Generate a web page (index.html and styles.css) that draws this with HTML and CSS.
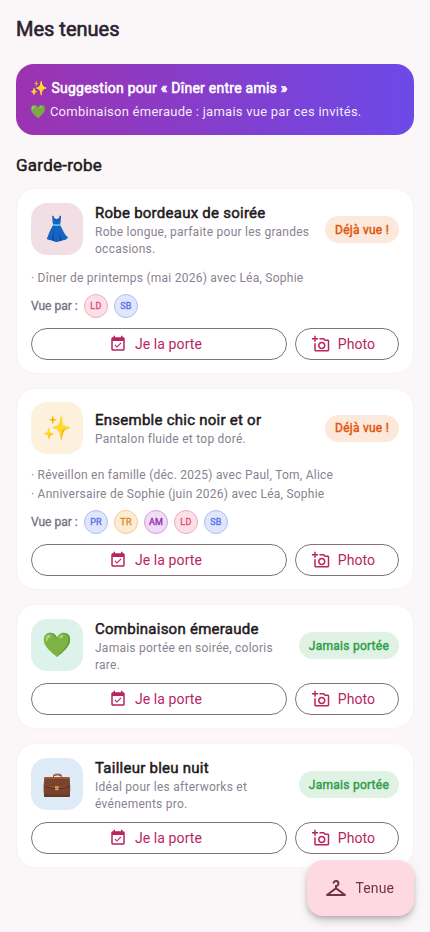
FILE: index.html
```html
<!DOCTYPE html>
<html lang="fr">
<head>
<meta charset="utf-8">
<meta name="viewport" content="width=device-width, initial-scale=1">
<title>Mes tenues</title>
<link rel="stylesheet" href="styles.css">
</head>
<body>
<svg class="sprite" aria-hidden="true">
  <symbol id="event" viewBox="0 0 24 24"><path d="M16.53 11.06L15.47 10l-4.88 4.88-2.12-2.12-1.06 1.06L10.59 17l5.94-5.94zM19 3h-1V1h-2v2H8V1H6v2H5c-1.11 0-1.99.9-1.99 2L3 19c0 1.1.89 2 2 2h14c1.1 0 2-.9 2-2V5c0-1.1-.9-2-2-2zm0 16H5V8h14v11z"/></symbol>
  <symbol id="camera" viewBox="0 0 24 24"><path d="M21 6h-3.17L16 4h-6v2h5.12l1.83 2H21v12H5v-9H3v9c0 1.1.9 2 2 2h16c1.1 0 2-.9 2-2V8c0-1.1-.9-2-2-2zM8 14c0 2.76 2.24 5 5 5s5-2.24 5-5-2.24-5-5-5-5 2.24-5 5zm5-3c1.65 0 3 1.35 3 3s-1.35 3-3 3-3-1.35-3-3 1.35-3 3-3zM5 6h3V4H5V1H3v3H0v2h3v3h2z"/></symbol>
  <symbol id="hanger" viewBox="0 0 24 24"><path d="M21.6 18.2L13 11.75v-.91c1.65-.49 2.8-2.17 2.43-4.05-.26-1.31-1.3-2.4-2.61-2.7C10.54 3.57 8.5 5.3 8.5 7.5h2c0-.83.67-1.5 1.5-1.5s1.5.67 1.5 1.5c0 .84-.69 1.52-1.53 1.5-.54-.01-.97.45-.97.99v1.76L2.4 18.2c-.77.58-.36 1.8.6 1.8h18c.96 0 1.37-1.22.6-1.8zM6 18l6-4.5 6 4.5H6z"/></symbol>
</svg>
<main class="page">
  <h1 class="title">Mes tenues</h1>
  <section class="suggestion">
    <p class="suggestion-title">✨ Suggestion pour « Dîner entre amis »</p>
    <p class="suggestion-text">💚 Combinaison émeraude : jamais vue par ces invités.</p>
  </section>
  <h2 class="section-title">Garde-robe</h2>

  <article class="card">
    <div class="head">
      <div class="thumb thumb-rose">👗</div>
      <div class="info"><h3 class="name">Robe bordeaux de soirée</h3><p class="desc">Robe longue, parfaite pour les grandes occasions.</p></div>
      <span class="chip chip-seen">Déjà vue !</span>
    </div>
    <ul class="wears"><li>· Dîner de printemps (mai 2026) avec Léa, Sophie</li></ul>
    <div class="seen"><span class="seen-label">Vue par :</span><span class="avatar pink">LD</span><span class="avatar blue">SB</span></div>
    <div class="actions">
      <button class="btn btn-wide"><svg class="icon"><use href="#event"/></svg>Je la porte</button>
      <button class="btn"><svg class="icon"><use href="#camera"/></svg>Photo</button>
    </div>
  </article>

  <article class="card">
    <div class="head">
      <div class="thumb thumb-gold">✨</div>
      <div class="info"><h3 class="name">Ensemble chic noir et or</h3><p class="desc">Pantalon fluide et top doré.</p></div>
      <span class="chip chip-seen">Déjà vue !</span>
    </div>
    <ul class="wears"><li>· Réveillon en famille (déc. 2025) avec Paul, Tom, Alice</li><li>· Anniversaire de Sophie (juin 2026) avec Léa, Sophie</li></ul>
    <div class="seen"><span class="seen-label">Vue par :</span><span class="avatar blue">PR</span><span class="avatar orange">TR</span><span class="avatar purple">AM</span><span class="avatar pink">LD</span><span class="avatar blue">SB</span></div>
    <div class="actions">
      <button class="btn btn-wide"><svg class="icon"><use href="#event"/></svg>Je la porte</button>
      <button class="btn"><svg class="icon"><use href="#camera"/></svg>Photo</button>
    </div>
  </article>

  <article class="card">
    <div class="head">
      <div class="thumb thumb-green">💚</div>
      <div class="info"><h3 class="name">Combinaison émeraude</h3><p class="desc">Jamais portée en soirée, coloris rare.</p></div>
      <span class="chip chip-new">Jamais portée</span>
    </div>
    <div class="actions">
      <button class="btn btn-wide"><svg class="icon"><use href="#event"/></svg>Je la porte</button>
      <button class="btn"><svg class="icon"><use href="#camera"/></svg>Photo</button>
    </div>
  </article>

  <article class="card">
    <div class="head">
      <div class="thumb thumb-blue">💼</div>
      <div class="info"><h3 class="name">Tailleur bleu nuit</h3><p class="desc">Idéal pour les afterworks et événements pro.</p></div>
      <span class="chip chip-new">Jamais portée</span>
    </div>
    <div class="actions">
      <button class="btn btn-wide"><svg class="icon"><use href="#event"/></svg>Je la porte</button>
      <button class="btn"><svg class="icon"><use href="#camera"/></svg>Photo</button>
    </div>
  </article>
</main>
<button class="fab"><svg class="fab-icon"><use href="#hanger"/></svg>Tenue</button>
</body>
</html>
```
FILE: styles.css
```css
* { box-sizing: border-box; margin: 0; padding: 0; }
body {
  height: 932px;
  overflow: hidden;
  background: #fbf7f8;
  color: #1f1a1d;
  font-family: Roboto, "Noto Color Emoji", sans-serif;
  font-weight: 400;
  letter-spacing: 0.25px;
}
.sprite { position: absolute; width: 0; height: 0; }
.page { padding: 15px 16px; }
.title {
  font-size: 20px;
  font-weight: 400;
  line-height: 28px;
  letter-spacing: 0;
  color: #2a2230;
  -webkit-text-stroke: 0.6px;
}
.suggestion {
  margin-top: 21px;
  height: 71px;
  padding: 14px;
  border-radius: 18px;
  background: linear-gradient(90deg, #9c33b0, #6d49e8);
  color: #fff;
}
.suggestion-title { font-size: 14px; line-height: 20px; -webkit-text-stroke: 0.55px; }
.suggestion-text { margin-top: 4px; font-size: 13px; line-height: 19px; color: rgba(255, 255, 255, 0.92); }
.section-title {
  margin: 18px 0 11px;
  font-size: 17px;
  font-weight: 400;
  line-height: 24px;
  -webkit-text-stroke: 0.5px;
}
.card {
  margin-bottom: 14px;
  padding: 13px 14px;
  border: 1px solid #f7f3f5;
  border-radius: 20px;
  background: #fff;
}
.head { display: flex; align-items: center; }
.thumb {
  display: flex;
  align-items: center;
  justify-content: center;
  flex: none;
  width: 52px;
  height: 52px;
  margin: -0.3px 0 0.3px;
  border-radius: 16px;
  font-size: 24px;
  letter-spacing: 0;
}
.thumb-rose { background: #f2dfe6; }
.thumb-gold { background: #fdf0dc; }
.thumb-green { background: #def2ec; }
.thumb-blue { background: #dfebf7; }
.info { flex: 1; min-width: 0; margin-bottom: -1px; padding: 1px 8px 0 12px; }
.name { font-size: 15px; font-weight: 400; line-height: 21px; -webkit-text-stroke: 0.5px; }
.desc { font-size: 12px; line-height: 17px; color: #8a8290; }
.chip {
  flex: none;
  padding: 5.5px 10px 4.5px;
  border-radius: 14px;
  font-size: 12px;
  line-height: 17px;
  -webkit-text-stroke: 0.45px;
}
.chip-seen { background: #fde8dc; color: #e0560b; }
.chip-new { background: #e0f2e4; color: #2e9f4a; }
.wears { margin: 11px 0 7px; list-style: none; font-size: 12px; line-height: 17px; color: #8a8290; }
.wears li { padding-top: 2px; }
.seen { display: flex; align-items: center; }
.seen-label { width: 47px; font-size: 12px; letter-spacing: 0; white-space: nowrap; color: #79707e; -webkit-text-stroke: 0.3px; }
.avatar {
  display: flex;
  align-items: center;
  justify-content: center;
  width: 24px;
  height: 24px;
  margin-left: 6px;
  border: 1px solid;
  border-radius: 50%;
  font-size: 9px;
  -webkit-text-stroke: 0.35px;
}
.pink { background: #fce0e8; border-color: #f3a9c0; color: #e0527c; }
.blue { background: #e0e6fc; border-color: #afbef5; color: #5871e8; }
.orange { background: #fdebd3; border-color: #f5cc93; color: #e08a1a; }
.purple { background: #efdcf5; border-color: #d0a0df; color: #9230ad; }
.actions { display: flex; gap: 8px; margin-top: 10px; }
.btn {
  display: flex;
  align-items: center;
  justify-content: center;
  gap: 8px;
  height: 32px;
  padding: 0 22.8px 0 15.5px;
  border: 1px solid #857378;
  border-radius: 16px;
  background: transparent;
  color: #b8255f;
  font: 400 14px/20px Roboto, sans-serif;
  letter-spacing: 0.1px;
}
.btn-wide { flex: 1; }
.icon { width: 18px; height: 18px; fill: currentColor; }
.fab {
  position: fixed;
  right: 16px;
  bottom: 16px;
  display: flex;
  align-items: center;
  gap: 8px;
  height: 56px;
  padding: 0 20px 0 16.4px;
  border: 0;
  border-radius: 16px;
  background: #ffd9e1;
  color: #713347;
  font: 400 14px/20px Roboto, sans-serif;
  letter-spacing: 0.1px;
  box-shadow: 0 3px 5px -1px rgba(0, 0, 0, 0.2), 0 6px 10px rgba(0, 0, 0, 0.12), 0 1px 14px rgba(0, 0, 0, 0.05);
}
.fab-icon { width: 24px; height: 24px; fill: currentColor; }
```
